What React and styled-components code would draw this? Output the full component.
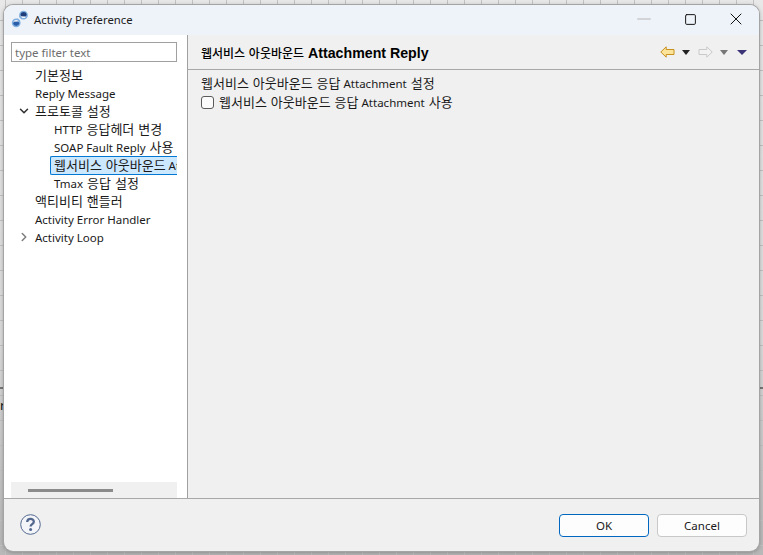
import React from 'react'
import styled, { createGlobalStyle } from 'styled-components'
import { ChevronDown, ChevronRight, Minus, Square, X } from 'lucide-react'

const Global = createGlobalStyle`
  html, body { margin: 0; padding: 0; background: #fff; }
  body { font-family: "Noto Sans", "Noto Sans CJK KR", sans-serif; font-size: 11.5px; color: #1a1a1a; }
`

const Desktop = styled.div`
  position: relative;
  width: 763px;
  height: 555px;
  box-sizing: border-box;
  padding: 5px 4px 4px 4px;
  overflow: hidden;
  background-color: #d8d8d8;
  background-image:
    linear-gradient(#00000000 387px, #777 387px, #777 389px, #00000000 389px),
    repeating-linear-gradient(90deg, transparent 0 5px, #c2c2c2 5px 6px, transparent 6px 17px),
    repeating-linear-gradient(180deg, transparent 0 20px, #c2c2c2 20px 21px, transparent 21px 25px),
    linear-gradient(#e8e8e8, #dcdcdc 60%, #b8b8b8);
`

// bit of the window behind this dialog, showing past its left edge
const BehindGlyph = styled.span`
  position: absolute;
  left: 0;
  top: 396px;
  font: 13px "Noto Sans", sans-serif;
  color: #111;
`

const Win = styled.div`
  position: relative;
  height: 100%;
  display: flex;
  flex-direction: column;
  border-radius: 9px;
  overflow: hidden;
  background: #f0f0f0;
  box-shadow: 0 0 0 1px #a4a4a4, 0 1px 5px rgba(0, 0, 0, 0.35);
`

const TitleBar = styled.div`
  height: 30px;
  flex: none;
  box-sizing: border-box;
  display: flex;
  align-items: center;
  background: #eef2f9;
  padding: 0 0 2px 7px;
`

const TitleText = styled.span`
  margin-left: 5px;
  font-size: 11.3px;
  color: #1c1c1c;
`

const WinButtons = styled.div`
  margin-left: auto;
  display: flex;
`

const WinButton = styled.div`
  width: 46px;
  height: 28px;
  display: flex;
  align-items: center;
  justify-content: center;
  color: ${p => p.$dim ? '#b0b0b0' : '#111'};
`

const Main = styled.div`
  flex: 1;
  min-height: 0;
  display: flex;
`

const Side = styled.div`
  width: 183px;
  flex: none;
  box-sizing: border-box;
  display: flex;
  flex-direction: column;
  background: #fff;
  padding: 7px 10px 0 7px;
`

const Filter = styled.input`
  display: block;
  width: 100%;
  height: 20px;
  flex: none;
  box-sizing: border-box;
  border: 1px solid #a0a0a0;
  padding: 0 3px;
  font: 11.5px "Noto Sans", sans-serif;
  outline: none;
  &::placeholder { color: #6d6d6d; opacity: 1; }
`

const Tree = styled.div`
  flex: 1;
  min-height: 0;
  overflow: hidden;
  padding-top: 4px;
`

const Row = styled.div`
  height: 18px;
  display: flex;
  align-items: center;
  white-space: nowrap;
  padding-left: ${p => p.$depth * 19 + 5}px;
`

const Twist = styled.span`
  width: 19px;
  flex: none;
  display: flex;
  align-items: center;
  padding-left: 1px;
  box-sizing: border-box;
  color: ${p => p.$open ? '#333' : '#808080'};
`

const Label = styled.span`
  white-space: nowrap;
`

const Selected = styled.span`
  display: block;
  box-sizing: border-box;
  height: 19px;
  line-height: 17px;
  flex: 1;
  min-width: 0;
  overflow: hidden;
  margin-left: -4px;
  padding-left: 3px;
  background: #cce8ff;
  border: 1px solid #0078d4;
  border-right: 0;
  border-radius: 2px 0 0 2px;
`

const HScroll = styled.div`
  height: 16px;
  flex: none;
  background: #f0f0f0;
  padding: 7px 0 0 17px;
  box-sizing: border-box;
`

const Thumb = styled.div`
  width: 85px;
  height: 3px;
  background: #8b8b8b;
`

const Content = styled.div`
  flex: 1;
  min-width: 0;
  display: flex;
  flex-direction: column;
  border-left: 1px solid #a0a0a0;
`

const Header = styled.div`
  height: 35px;
  flex: none;
  box-sizing: border-box;
  display: flex;
  align-items: center;
  border-bottom: 1px solid #a8a8a8;
  padding: 0 12px 0 13px;
`

const HeaderTitle = styled.span`
  font-family: "Liberation Sans", "Noto Sans CJK KR", sans-serif;
  font-weight: 700;
  font-size: 14.2px;
  color: #000;
`

const HeaderTitleKo = styled.span`
  font-family: "Noto Sans CJK KR", sans-serif;
  font-size: 12px;
  font-weight: 500;
  word-spacing: 1px;
`

const Nav = styled.div`
  margin-left: auto;
  display: flex;
  align-items: center;
`

const Caret = styled.span`
  width: 0;
  height: 0;
  margin: 0 ${p => p.$mr || 0}px 0 ${p => p.$ml || 0}px;
  border-left: ${p => p.$wide ? 5 : 4}px solid transparent;
  border-right: ${p => p.$wide ? 5 : 4}px solid transparent;
  border-top: 5px solid ${p => p.$color};
`

const Body = styled.div`
  flex: 1;
  padding: 5px 13px;
`

const Line = styled.div`
  height: 18px;
  line-height: 18px;
`

const CheckLine = styled.label`
  height: 18px;
  display: flex;
  align-items: center;
  gap: 5px;
`

const Check = styled.span`
  width: 13px;
  height: 13px;
  flex: none;
  box-sizing: border-box;
  border: 1px solid #5a5a5a;
  border-radius: 3px;
  background: #fbfbfb;
`

const Footer = styled.div`
  height: 53px;
  flex: none;
  box-sizing: border-box;
  border-top: 1px solid #a8a8a8;
  display: flex;
  align-items: center;
  padding: 0 12px 0 16px;
`

const HelpWrap = styled.span`
  display: flex;
  margin-top: -2px;
`

const Buttons = styled.div`
  margin-left: auto;
  display: flex;
  gap: 8px;
`

const Button = styled.button`
  width: 90px;
  height: 23px;
  box-sizing: border-box;
  padding: 0;
  background: #fdfdfd;
  border: 1px solid ${p => p.$primary ? '#0067c0' : '#c8c8c8'};
  border-radius: 4px;
  font: 11.5px "Noto Sans", sans-serif;
  color: #1a1a1a;
`

const Ko = styled.span`
  font-size: 13px;
  line-height: 1;
  word-spacing: 0.6px;
`

// hangul runs are set a bit larger than latin, like the system font pairing does
const Txt = ({ children }) => (
  <Label>
    {children.split(/( ?[가-힣]+(?: [가-힣]+)*)/).map((part, i) =>
      i % 2 ? <Ko key={i}>{part}</Ko> : part
    )}
  </Label>
)

const AppLogo = () => (
  <svg width="18" height="18" viewBox="0 0 18 18">
    <path d="M8.4 6.4 L11 9 M6.4 8.6 L9 11.4" stroke="#8fb4dc" strokeWidth="1.2" />
    <circle cx="12.5" cy="5.2" r="3.6" fill="none" stroke="#7fb0e0" strokeWidth="1.6" />
    <path d="M9.4 4.4 A3.3 3.3 0 0 1 15.8 4.4 L15 6.4 L10 6.2 Z" fill="#1e3f7c" />
    <circle cx="5.2" cy="12.8" r="3.6" fill="none" stroke="#7fb0e0" strokeWidth="1.6" />
    <path d="M2 13.6 A3.3 3.3 0 0 0 8.4 13.6 L7.6 11.6 L2.8 11.8 Z" fill="#2a5ea8" />
  </svg>
)

const BackArrow = () => (
  <svg width="15" height="12" viewBox="0 0 15 12">
    <path d="M.8 6 L6.2 .8 V3.5 H14 V8.5 H6.2 V11.2 Z" fill="#fce39a" stroke="#c8921e" strokeWidth="1" />
  </svg>
)

const ForwardArrow = () => (
  <svg width="15" height="12" viewBox="0 0 15 12">
    <path d="M14.2 6 L8.8 .8 V3.5 H1 V8.5 H8.8 V11.2 Z" fill="#f2f2f2" stroke="#c9c9c9" strokeWidth="1" />
  </svg>
)

const HelpIcon = () => (
  <svg width="21" height="21" viewBox="0 0 21 21">
    <circle cx="10.5" cy="10.5" r="9.8" fill="#f4f5f8" stroke="#52688f" strokeWidth="1" />
    <path d="M7.2 8 C7.3 3.8 13.8 3.9 13.8 7.8 C13.8 10.2 10.6 10.2 10.6 12.6" fill="none" stroke="#52688f" strokeWidth="2.3" />
    <circle cx="10.6" cy="15.6" r="1.5" fill="#52688f" />
  </svg>
)

const App = () => (
  <>
    <Global />
    <Desktop>
      <BehindGlyph>r</BehindGlyph>
      <Win>
        <TitleBar>
          <AppLogo />
          <TitleText>Activity Preference</TitleText>
          <WinButtons>
            <WinButton $dim><Minus size={22} strokeWidth={1} /></WinButton>
            <WinButton><Square size={13} strokeWidth={1.8} /></WinButton>
            <WinButton><X size={20} strokeWidth={1.2} /></WinButton>
          </WinButtons>
        </TitleBar>
        <Main>
          <Side>
            <Filter placeholder="type filter text" readOnly />
            <Tree>
              <Row $depth={1}><Txt>기본정보</Txt></Row>
              <Row $depth={1}><Txt>Reply Message</Txt></Row>
              <Row $depth={0}>
                <Twist $open><ChevronDown size={14} strokeWidth={2.6} /></Twist>
                <Txt>프로토콜 설정</Txt>
              </Row>
              <Row $depth={2}><Txt>HTTP 응답헤더 변경</Txt></Row>
              <Row $depth={2}><Txt>SOAP Fault Reply 사용</Txt></Row>
              <Row $depth={2}><Selected><Txt>웹서비스 아웃바운드 Attachment Reply</Txt></Selected></Row>
              <Row $depth={2}><Txt>Tmax 응답 설정</Txt></Row>
              <Row $depth={1}><Txt>액티비티 핸들러</Txt></Row>
              <Row $depth={1}><Txt>Activity Error Handler</Txt></Row>
              <Row $depth={0}>
                <Twist><ChevronRight size={14} strokeWidth={2.6} /></Twist>
                <Txt>Activity Loop</Txt>
              </Row>
            </Tree>
            <HScroll><Thumb /></HScroll>
          </Side>
          <Content>
            <Header>
              <HeaderTitle><HeaderTitleKo>웹서비스 아웃바운드</HeaderTitleKo> Attachment Reply</HeaderTitle>
              <Nav>
                <BackArrow />
                <Caret $color="#222" $ml={7} $mr={8} />
                <ForwardArrow />
                <Caret $color="#777" $ml={7} $mr={9} />
                <Caret $color="#3b3578" $wide />
              </Nav>
            </Header>
            <Body>
              <Line><Txt>웹서비스 아웃바운드 응답 Attachment 설정</Txt></Line>
              <CheckLine><Check /><Txt>웹서비스 아웃바운드 응답 Attachment 사용</Txt></CheckLine>
            </Body>
          </Content>
        </Main>
        <Footer>
          <HelpWrap><HelpIcon /></HelpWrap>
          <Buttons>
            <Button $primary>OK</Button>
            <Button>Cancel</Button>
          </Buttons>
        </Footer>
      </Win>
    </Desktop>
  </>
)

export default App
